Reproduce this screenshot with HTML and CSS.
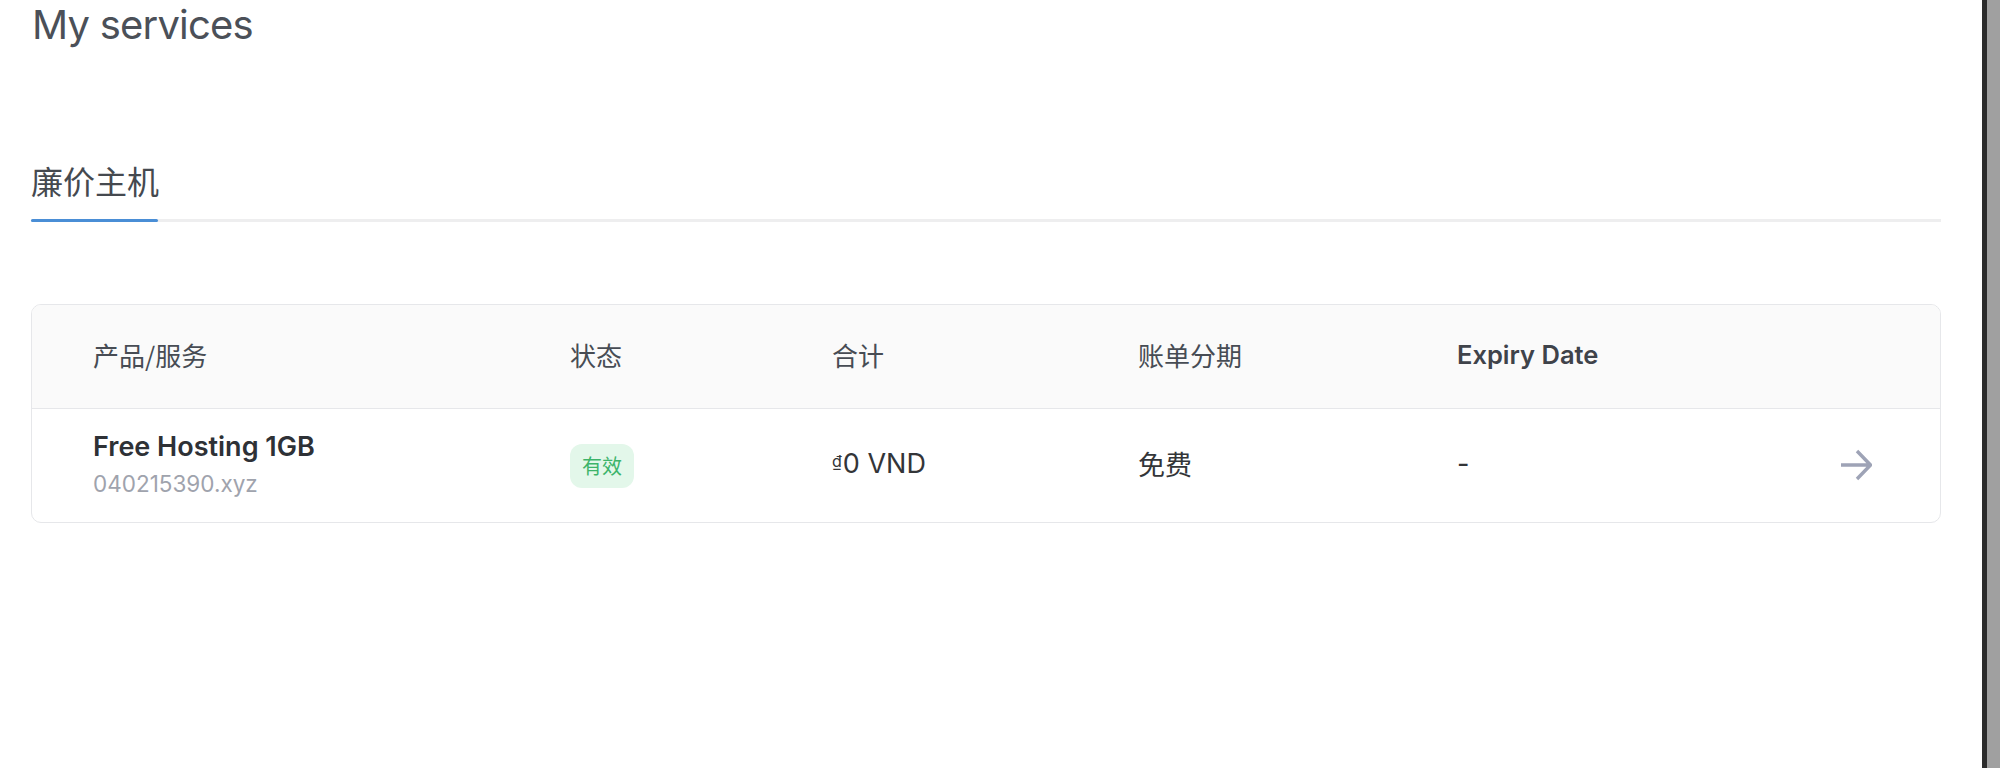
FILE: index.html
```html
<!DOCTYPE html>
<html lang="zh">
<head>
<meta charset="utf-8">
<title>My services</title>
<link rel="stylesheet" href="styles.css">
</head>
<body>
<div class="page">
  <main class="main">
    <h1 class="title">My services</h1>
    <div class="tabs">
      <div class="tab active">廉价主机</div>
    </div>
    <div class="table">
      <div class="row head">
        <div class="cell">产品/服务</div>
        <div class="cell">状态</div>
        <div class="cell">合计</div>
        <div class="cell">账单分期</div>
        <div class="cell strong">Expiry Date</div>
        <div class="cell"></div>
      </div>
      <div class="row body-row">
        <div class="cell product">
          <div class="name">Free Hosting 1GB</div>
          <div class="domain">040215390.xyz</div>
        </div>
        <div class="cell status"><span class="badge">有效</span></div>
        <div class="cell value"><span class="dong">₫</span>0 VND</div>
        <div class="cell value">免费</div>
        <div class="cell value">-</div>
        <div class="cell go">
          <svg class="arrow" viewBox="0 0 32 32" width="32" height="32" aria-hidden="true">
            <path d="M1 16 H30 M17 2 L30.5 16 L17 30" fill="none" stroke="#9ea3b6" stroke-width="3.4"/>
          </svg>
        </div>
      </div>
    </div>
  </main>
  <div class="scrollbar"><div class="track"></div></div>
</div>
</body>
</html>
```

FILE: styles.css
```css
html, body {
  margin: 0;
  padding: 0;
  background: #ffffff;
}

body {
  font-family: "Inter", "Noto Sans CJK SC", sans-serif;
  color: #333;
}

.page {
  display: flex;
  height: 100vh;
  overflow: hidden;
}

.main {
  flex: 1;
  padding: 0 41px 0 31px;
  min-width: 0;
}

.title {
  margin: 0 0 0 1px;
  font-size: 40px;
  line-height: 49px;
  font-weight: 400;
  letter-spacing: -0.8px;
  color: #4b5058;
}

.tabs {
  margin-top: 111px;
  display: flex;
  border-bottom: 3px solid #eeeeef;
}

.tab {
  position: relative;
  font-family: "Noto Sans CJK SC", sans-serif;
  font-size: 32px;
  line-height: 40px;
  color: #45494f;
  padding-bottom: 19px;
}

.tab.active::after {
  content: "";
  position: absolute;
  left: 0;
  right: 1px;
  bottom: -3px;
  height: 3px;
  border-radius: 2px;
  background: #4a8ed6;
}

.table {
  margin-top: 82px;
  border: 1px solid #e6e7ea;
  border-radius: 10px;
  overflow: hidden;
}

.row {
  display: grid;
  grid-template-columns: 477px 262px 306px 319px 1fr 40px;
  align-items: center;
  padding: 0 68px 5px 61px;
  box-sizing: border-box;
}

.row.head {
  height: 104px;
  background: #fafafa;
  border-bottom: 1px solid #e6e7ea;
  font-family: "Noto Sans CJK SC", sans-serif;
  font-size: 26px;
  color: #474c54;
}

.cell.strong {
  font-family: "Inter", sans-serif;
  font-weight: 600;
  font-size: 25.5px;
  color: #3f434a;
}

.row.body-row {
  height: 113px;
}

.product {
  display: flex;
  flex-direction: column;
  gap: 8px;
  padding-top: 2px;
}

.name {
  font-size: 27px;
  line-height: 32px;
  font-weight: 600;
  color: #2e3136;
}

.domain {
  font-size: 22.5px;
  line-height: 26px;
  color: #9fa3ad;
}

.status {
  padding-top: 5px;
}

.badge {
  display: inline-block;
  height: 44px;
  line-height: 44px;
  padding: 0 12px;
  border-radius: 12px;
  background: #e3f7ea;
  color: #3db46a;
  font-family: "Noto Sans CJK SC", sans-serif;
  font-size: 20px;
}

.value {
  font-family: "Inter", "Noto Sans CJK SC", sans-serif;
  font-size: 27px;
  color: #333538;
}

.dong {
  font-size: 16px;
  vertical-align: 6px;
  margin-right: 1px;
}

.go {
  display: flex;
  justify-content: flex-end;
  padding-top: 3px;
}

.arrow {
  display: block;
}

.scrollbar {
  width: 18px;
  display: flex;
  background: #2c2c2c;
  padding-left: 5px;
  box-sizing: border-box;
}

.track {
  flex: 1;
  background: #a0a0a0;
}
```
